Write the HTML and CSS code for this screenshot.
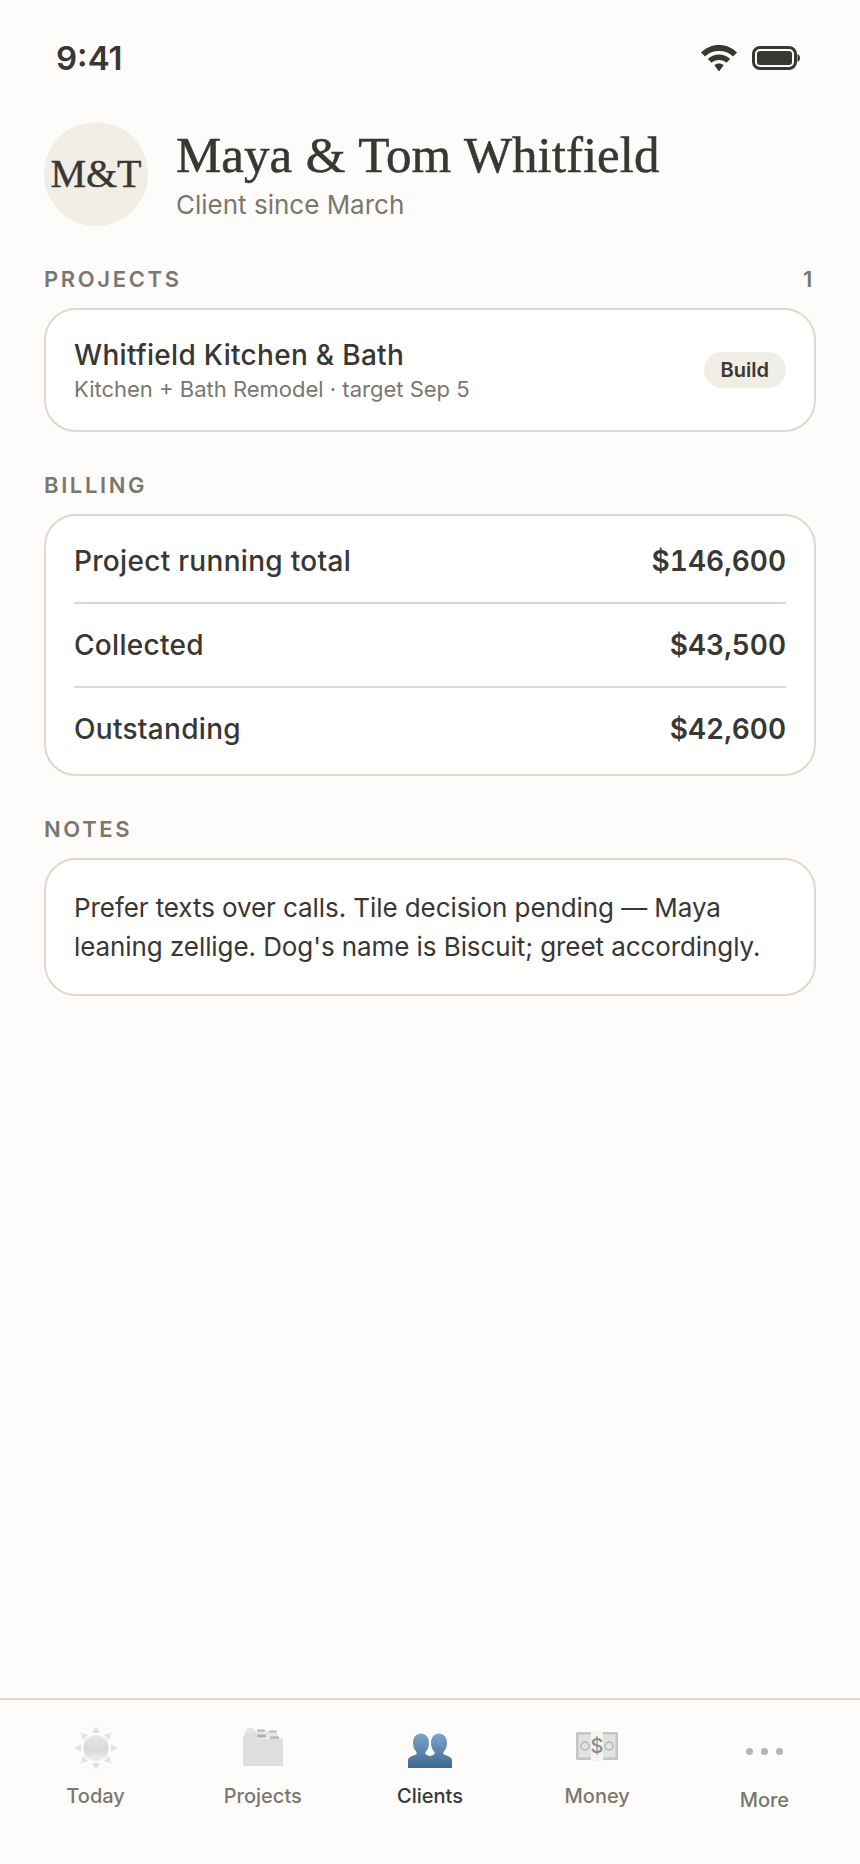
FILE: index.html
```html
<!DOCTYPE html>
<html lang="en">
<head>
    <meta charset="UTF-8">
    <meta name="viewport" content="width=device-width, initial-scale=1.0">
    <title>Maya &amp; Tom Whitfield</title>
    <link rel="stylesheet" href="styles.css">
</head>
<body>
    <div class="screen">
        <div class="status">
            <span class="time">9:41</span>
            <div class="status-icons">
                <svg width="38" height="28" viewBox="0 0 38 28">
                    <path d="M19 1C12 1 6 3.500 1 8.500L5 12.500C9 8.700 13.500 7 19 7S29 8.700 33 12.500L37 8.500C32 3.500 26 1 19 1Z" fill="#383734"/>
                    <path d="M19 10.500C14.500 10.500 11 12 7.800 15L11.600 18.800C13.700 17 16 16 19 16S24.300 17 26.400 18.800L30.200 15C27 12 23.500 10.500 19 10.500Z" fill="#383734"/>
                    <path d="M19 19.500C17 19.500 15.600 20 14.300 21.300L19 27.500L23.700 21.300C22.400 20 21 19.500 19 19.500Z" fill="#383734"/>
                </svg>
                <svg width="48" height="24" viewBox="0 0 48 24">
                    <rect x="1.500" y="1.500" width="42" height="21" rx="6.500" fill="none" stroke="#383734" stroke-width="3"/>
                    <rect x="5" y="5" width="35" height="14" rx="3" fill="#383734"/>
                    <path d="M45.500 8C47 8.600 48 10 48 12S47 15.400 45.500 16Z" fill="#383734"/>
                </svg>
            </div>
        </div>

        <header class="client-head">
            <div class="avatar">M&amp;T</div>
            <div>
                <h1>Maya &amp; Tom Whitfield</h1>
                <p class="since">Client since March</p>
            </div>
        </header>

        <section class="section">
            <div class="section-label"><span>PROJECTS</span><span class="count">1</span></div>
            <div class="card project">
                <div class="project-text">
                    <div class="project-name">Whitfield Kitchen &amp; Bath</div>
                    <div class="project-sub">Kitchen + Bath Remodel · target Sep 5</div>
                </div>
                <span class="badge">Build</span>
            </div>
        </section>

        <section class="section">
            <div class="section-label"><span>BILLING</span></div>
            <div class="card billing">
                <div class="row"><span>Project running total</span><b>$146,600</b></div>
                <div class="row"><span>Collected</span><b>$43,500</b></div>
                <div class="row"><span>Outstanding</span><b>$42,600</b></div>
            </div>
        </section>

        <section class="section">
            <div class="section-label"><span>NOTES</span></div>
            <div class="card notes">Prefer texts over calls. Tile decision pending — Maya leaning zellige. Dog's name is Biscuit; greet accordingly.</div>
        </section>

        <nav class="tabs">
            <div class="tab">
                <svg class="tab-icon" width="46" height="46" viewBox="0 0 46 46">
                    <defs>
                        <linearGradient id="sunFill" x1="0" y1="0" x2="0" y2="1">
                            <stop offset="0" stop-color="#e6e6e5"/>
                            <stop offset="0.6" stop-color="#dadad9"/>
                            <stop offset="1" stop-color="#eeeeed"/>
                        </linearGradient>
                    </defs>
                    <g fill="#e3e3e2">
                        <path d="M23 1L27 8H19Z"/>
                        <path d="M23 45L27 38H19Z"/>
                        <path d="M1 23L8 19V27Z"/>
                        <path d="M45 23L38 19V27Z"/>
                        <path d="M7.500 7.500L15 10L10 15Z"/>
                        <path d="M38.500 7.500L31 10L36 15Z"/>
                        <path d="M7.500 38.500L10 31L15 36Z"/>
                        <path d="M38.500 38.500L36 31L31 36Z"/>
                    </g>
                    <circle cx="23" cy="23" r="13" fill="url(#sunFill)" stroke="#f4f4f3"/>
                </svg>
                <span>Today</span>
            </div>
            <div class="tab">
                <svg class="tab-icon" width="46" height="46" viewBox="0 -1.500 46 46">
                    <path d="M5 4.500L8 1.500H13L15 4.500H20L21 3.500H25L26 4.500H36L39 11H5Z" fill="#e6e6e5"/>
                    <rect x="17" y="3" width="8" height="2" rx="1" fill="#b8b8b7"/>
                    <rect x="29" y="4" width="8" height="2" rx="1" fill="#b8b8b7"/>
                    <rect x="17" y="8" width="9" height="3" rx="1" fill="#b0b0af"/>
                    <rect x="30" y="10" width="9" height="3" rx="1" fill="#b0b0af"/>
                    <path d="M3 11L6 6H15L18 12H30L33 12H43V39.500H3Z" fill="#dededd"/>
                </svg>
                <span>Projects</span>
            </div>
            <div class="tab active">
                <svg class="tab-icon" width="46" height="46" viewBox="0 -2 46 46">
                    <defs>
                        <linearGradient id="bustFill" x1="0" y1="0" x2="0" y2="1">
                            <stop offset="0" stop-color="#7ba5cb"/>
                            <stop offset="1" stop-color="#3f6791"/>
                        </linearGradient>
                    </defs>
                    <path d="M1 41V33.500C1 30.500 4 29.500 8 28C9.500 27.500 10 26.500 9.500 25C7.500 23 6 20 6 16C6 10 9.500 6.500 14 6.500C18.500 6.500 22 10 22 16C22 20 20.500 23 18.500 25C18 26.500 18.500 27.500 20 28C21 28.500 22.500 29 23 29.500V41Z" fill="url(#bustFill)"/>
                    <path d="M45 41V33.500C45 30.500 42 29.500 38 28C36.500 27.500 36 26.500 36.500 25C38.500 23 40 20 40 16C40 10 36.500 6.500 32 6.500C27.500 6.500 24 10 24 16C24 20 25.500 23 27.500 25C28 26.500 27.500 27.500 26 28C22.500 29.500 17 30.500 15 33V41Z" fill="url(#bustFill)"/>
                </svg>
                <span>Clients</span>
            </div>
            <div class="tab">
                <svg class="tab-icon" width="46" height="46" viewBox="0 0 46 46">
                    <rect x="2" y="7" width="42" height="28" rx="1.500" fill="#c4c4c3"/>
                    <rect x="4.500" y="9.500" width="13.500" height="23" fill="#e2e2e1"/>
                    <rect x="28" y="9.500" width="13.500" height="23" fill="#e2e2e1"/>
                    <circle cx="11" cy="21" r="4" fill="none" stroke="#b5b5b4" stroke-width="1.500"/>
                    <circle cx="35" cy="21" r="4" fill="none" stroke="#b5b5b4" stroke-width="1.500"/>
                    <rect x="17" y="6" width="12" height="30" fill="#f4f4f3"/>
                    <text x="23" y="28" class="bill-sign">$</text>
                </svg>
                <span>Money</span>
            </div>
            <div class="tab more">
                <div class="dots"><i></i><i></i><i></i></div>
                <span>More</span>
            </div>
        </nav>
    </div>
</body>
</html>
```

FILE: styles.css
```css
* {
    box-sizing: border-box;
}
body {
    background-color: #fefcfa;
    color: #383734;
    font-family: Inter, sans-serif;
    margin: 0;
}
.screen {
    display: flex;
    flex-direction: column;
    height: 1864px;
    padding-top: 40px;
}
.status {
    display: flex;
    justify-content: space-between;
    align-items: center;
    height: 36px;
    padding: 0 60px 0 56px;
}
.time {
    font-size: 33px;
    font-weight: 600;
}
.status-icons {
    display: flex;
    align-items: center;
    gap: 14px;
}
.client-head {
    display: flex;
    align-items: center;
    gap: 28px;
    margin: 46px 44px 0;
}
.avatar {
    display: flex;
    justify-content: center;
    align-items: center;
    width: 104px;
    height: 104px;
    padding-bottom: 2px;
    border-radius: 50%;
    background-color: #f1eee5;
    font-family: "Liberation Serif", serif;
    font-size: 40px;
    -webkit-text-stroke: 0.4px #383734;
}
h1 {
    margin: 0;
    font-family: "Liberation Serif", serif;
    font-size: 51px;
    font-weight: 400;
    line-height: 56px;
    word-spacing: 1px;
    -webkit-text-stroke: 0.5px #383734;
}
.since {
    margin: 6px 0 0;
    color: #7a776f;
    font-size: 26px;
    line-height: 32px;
}
.section {
    margin: 40px 44px 0;
}
.section-label {
    display: flex;
    justify-content: space-between;
    color: #7a776f;
    font-size: 22px;
    font-weight: 600;
    letter-spacing: 0.12em;
    line-height: 26px;
    margin-bottom: 16px;
}
.count {
    margin-right: 1px;
}
.card {
    background-color: #ffffff;
    border: 2px solid #e0d9cb;
    border-radius: 32px;
    padding: 0 28px;
}
.project {
    display: flex;
    justify-content: space-between;
    align-items: center;
    height: 124px;
}
.project-text {
    padding-top: 2px;
}
.project-name {
    font-size: 28px;
    font-weight: 500;
    letter-spacing: 0.3px;
    line-height: 34px;
}
.project-sub {
    margin-top: 2px;
    color: #7a776f;
    font-size: 22px;
    line-height: 30px;
}
.badge {
    background-color: #f1eee5;
    border-radius: 18px;
    padding: 0 17px;
    font-size: 20px;
    font-weight: 600;
    line-height: 36px;
}
.billing {
    padding: 2px 28px 4px;
}
.row {
    display: flex;
    justify-content: space-between;
    align-items: center;
    height: 84px;
    border-top: 2px solid #e0d9cb;
    font-size: 28px;
    font-weight: 500;
    letter-spacing: 0.3px;
}
.row:first-child {
    border-top-color: transparent;
}
.row b {
    font-weight: 600;
    font-variant-numeric: tabular-nums;
    letter-spacing: 0;
}
.notes {
    padding: 28px;
    font-size: 26px;
    letter-spacing: -0.08px;
    line-height: 39px;
}
.tabs {
    display: grid;
    grid-template-columns: repeat(5, 1fr);
    margin-top: auto;
    height: 166px;
    padding: 25px 12px 0;
    border-top: 2px solid #e0d9cb;
}
.tab {
    display: flex;
    flex-direction: column;
    align-items: center;
    color: #7a776f;
    font-size: 20px;
    font-weight: 500;
}
.tab-icon {
    display: block;
    margin-bottom: 13px;
}
.active {
    color: #383734;
}
.bill-sign {
    fill: #8a8a89;
    font-family: Inter, sans-serif;
    font-size: 20px;
    font-weight: 500;
    text-anchor: middle;
}
.dots {
    display: flex;
    align-items: center;
    gap: 8px;
    height: 46px;
    margin: 3px 0 14px;
}
.dots i {
    width: 7px;
    height: 7px;
    border-radius: 50%;
    background-color: #b5b5b4;
}
```
